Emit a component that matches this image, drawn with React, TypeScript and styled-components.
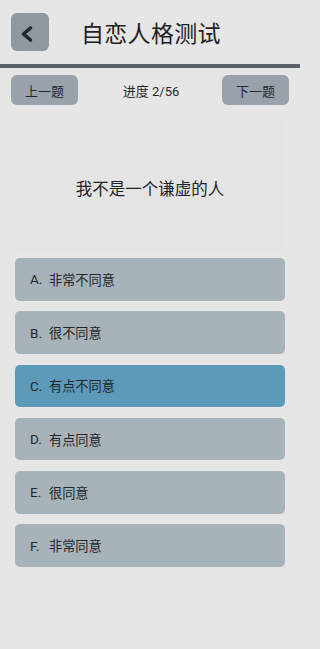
import React, { useState } from "react";
import styled, { createGlobalStyle } from "styled-components";

const Global = createGlobalStyle`
  html, body { margin: 0; padding: 0; background: #e6e6e6; overflow: hidden; width: 100%; }
  body { font-family: "Noto Sans CJK SC", "Roboto", sans-serif; color: #2e3236; }
  * { box-sizing: border-box; }
`;

const Page = styled.div`
  width: 100%;
  max-width: 300px;
  height: 649px;
  background: #e6e6e6;
  display: flex;
  flex-direction: column;
  overflow: hidden;
`;

const Header = styled.div`
  height: 64px;
  display: flex;
  align-items: center;
  padding: 0 11px;
  gap: 32px;
`;

const BackButton = styled.button`
  width: 38px;
  height: 38px;
  border: none;
  border-radius: 6px;
  background: #8f989f;
  display: block;
  padding: 0;
  flex-shrink: 0;
  svg { display: block; }
`;

const Title = styled.h1`
  margin: 0;
  font-size: 23px;
  font-weight: 400;
  letter-spacing: 0.3px;
  color: #1f2225;
  font-family: "Noto Sans CJK SC", sans-serif;
  white-space: nowrap;
`;

const Divider = styled.div`
  height: 4px;
  background: #5b6167;
`;

const NavRow = styled.div`
  display: flex;
  align-items: center;
  justify-content: space-between;
  padding: 7px 11px 0 11px;
`;

const NavButton = styled.button`
  width: 67px;
  height: 30px;
  border: none;
  border-radius: 6px;
  background: #99a2aa;
  font-family: "Noto Sans CJK SC", sans-serif;
  font-size: 13px;
  color: #25292d;
  padding: 0;
`;

const Progress = styled.div`
  font-size: 13px;
  color: #25292d;
  font-family: "Roboto", "Noto Sans CJK SC", sans-serif;
  margin-left: 2px;
`;

const QuestionBox = styled.div`
  margin: 14px 15px 0 15px;
  height: 131px;
  background: #e4e4e4;
  display: flex;
  align-items: center;
  justify-content: center;
  font-size: 16.5px;
  color: #1f2225;
  padding-top: 6px;
`;

const Options = styled.div`
  display: flex;
  flex-direction: column;
  gap: 10.8px;
  padding: 8px 15px 0 15px;
`;

const Option = styled.div<{ $selected: boolean }>`
  height: 42.5px;
  border-radius: 5px;
  background: ${(p) => (p.$selected ? "#5d9aba" : "#a8b2b9")};
  display: flex;
  align-items: center;
  padding-left: 15px;
  font-size: 13.2px;
  color: #23272b;
  cursor: pointer;
`;

const Letter = styled.span`
  width: 19px;
  font-family: "Roboto", sans-serif;
  font-size: 13.5px;
`;

const options = ["非常不同意", "很不同意", "有点不同意", "有点同意", "很同意", "非常同意"];

export default function App() {
  const [sel, setSel] = useState(2);
  return (
    <Page>
      <Global />
      <Header>
        <BackButton>
          <svg width="38" height="38" viewBox="0 0 38 38">
            <path d="M19.5 15 L12.5 21 L19.5 27" fill="none" stroke="#1f2a33" strokeWidth="3.6" strokeLinecap="round" strokeLinejoin="round" />
          </svg>
        </BackButton>
        <Title>自恋人格测试</Title>
      </Header>
      <Divider />
      <NavRow>
        <NavButton>上一题</NavButton>
        <Progress>进度 2/56</Progress>
        <NavButton>下一题</NavButton>
      </NavRow>
      <QuestionBox>我不是一个谦虚的人</QuestionBox>
      <Options>
        {options.map((o, i) => (
          <Option key={o} $selected={i === sel} onClick={() => setSel(i)}>
            <Letter>{String.fromCharCode(65 + i)}.</Letter>
            {o}
          </Option>
        ))}
      </Options>
    </Page>
  );
}
